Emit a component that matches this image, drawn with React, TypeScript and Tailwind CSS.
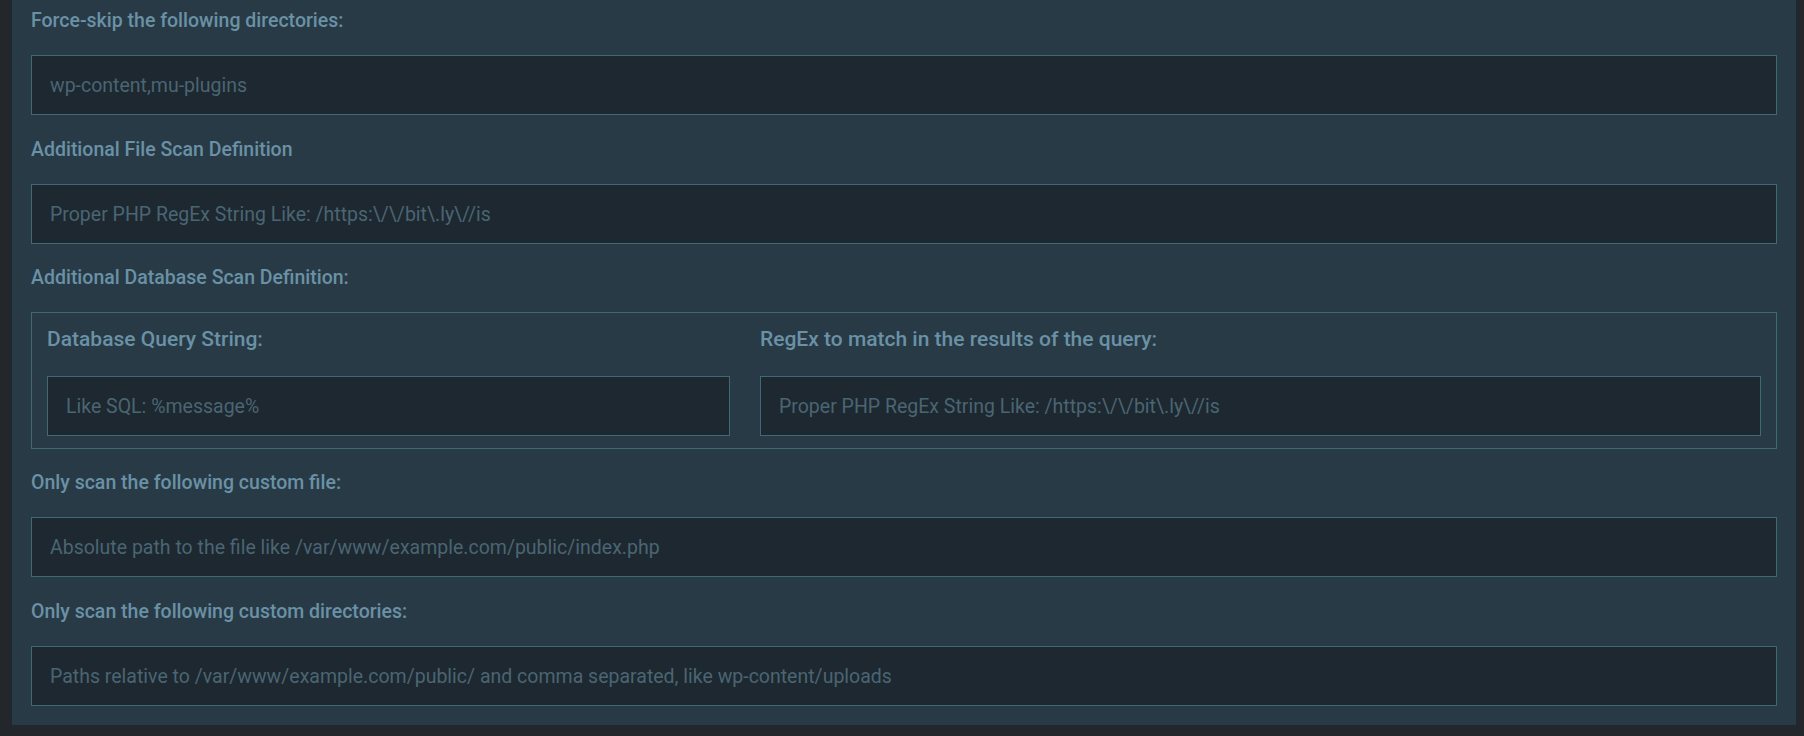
const FIELD_LABEL = "block h-6 text-[19.5px] font-medium leading-6 text-[#6a91a6]";
const INNER_LABEL = "block h-7 text-[21px] font-medium leading-7 text-[#6a91a6]";
const INPUT =
  "block h-[60px] w-full border border-[#3e6a75] bg-[#1e2830] pl-[18px] pr-4 text-[19.5px] text-[#9fb6c2] outline-none placeholder:text-[#4a6573]";

const REGEX_HINT = "Proper PHP RegEx String Like: /https:\\/\\/bit\\.ly\\//is";

function Field({
  label,
  placeholder,
  className = "",
}: {
  label: string;
  placeholder: string;
  className?: string;
}) {
  return (
    <div className={`flex flex-col gap-[22px] ${className}`}>
      <label className={FIELD_LABEL}>{label}</label>
      <input type="text" className={INPUT} placeholder={placeholder} />
    </div>
  );
}

export default function App() {
  return (
    <div
      className="min-h-screen bg-[#23272c] pl-[11px] pr-[7px] pb-[10px]"
      style={{ fontFamily: "Roboto, 'Noto Sans', sans-serif" }}
    >
      <div className="flex flex-col border-x border-b border-[#1d2930] bg-[#283a45] px-[19px] pt-[9px] pb-[19px]">
        <Field label="Force-skip the following directories:" placeholder="wp-content,mu-plugins" />
        <Field className="mt-[23px]" label="Additional File Scan Definition" placeholder={REGEX_HINT} />

        <div className="mt-[22px] flex flex-col gap-[22px]">
          <label className={FIELD_LABEL}>Additional Database Scan Definition:</label>
          <div className="grid grid-cols-[683px_1fr] gap-x-[30px] border border-[#3e6a75] px-[15px] pt-[12px] pb-[12px]">
            <div className="flex flex-col gap-[23px]">
              <label className={INNER_LABEL}>Database Query String:</label>
              <input type="text" className={INPUT} placeholder="Like SQL: %message%" />
            </div>
            <div className="flex flex-col gap-[23px]">
              <label className={INNER_LABEL}>RegEx to match in the results of the query:</label>
              <input type="text" className={INPUT} placeholder={REGEX_HINT} />
            </div>
          </div>
        </div>

        <Field
          className="mt-[22px]"
          label="Only scan the following custom file:"
          placeholder="Absolute path to the file like /var/www/example.com/public/index.php"
        />
        <Field
          className="mt-[23px]"
          label="Only scan the following custom directories:"
          placeholder="Paths relative to /var/www/example.com/public/ and comma separated, like wp-content/uploads"
        />
      </div>
    </div>
  );
}
